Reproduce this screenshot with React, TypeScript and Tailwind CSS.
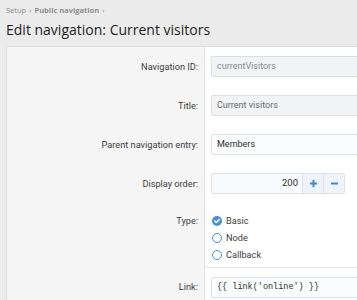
import React from "react";

const font = { fontFamily: 'Roboto, "Open Sans", Arial, sans-serif' };

function Row({ label, children, top = false, sep = false, tight = false }: { label: string; children: React.ReactNode; top?: boolean; sep?: boolean; tight?: boolean }) {
  return (
    <div className="flex">
      <div
        className={`flex w-[198px] shrink-0 justify-end border-r border-[#e2e2e2] bg-[#f5f5f5] pr-[6px] text-[9.2px] text-[#404040] ${
          top ? "items-start pt-[11px]" : "items-center"
        }`}
      >
        {label}
      </div>
      <div className={`flex-1 bg-white pl-[6px] ${tight ? "pt-[9px] pb-[4px]" : "py-[9px]"} ${sep ? "border-t border-[#e4e4e4]" : ""}`}>{children}</div>
    </div>
  );
}

function Radio({ label, checked = false }: { label: string; checked?: boolean }) {
  return (
    <div className="flex h-[17px] items-center gap-[4px] text-[9.2px] text-[#404040]">
      {checked ? (
        <svg width="10" height="10" viewBox="0 0 10 10" className="ml-[1px]">
          <circle cx="5" cy="5" r="5" fill="#4a90d6" />
          <path d="M2.7 5.1 L4.3 6.6 L7.3 3.5" stroke="white" strokeWidth="1.4" fill="none" strokeLinecap="round" strokeLinejoin="round" />
        </svg>
      ) : (
        <span className="ml-[1px] h-[10px] w-[10px] rounded-full border-[1.5px] border-[#4a90d6] bg-white" />
      )}
      <span>{label}</span>
    </div>
  );
}

export default function App() {
  return (
    <div className="h-[300px] w-[357px] overflow-hidden bg-[#ebebeb]" style={font}>
      <div className="pl-[6px] pt-[5px]">
        <div className="flex h-[12px] items-center gap-[3px] text-[7.5px] text-[#8f8f8f]" style={{ fontFamily: '"Open Sans", Arial, sans-serif' }}>
          <span>Setup</span>
          <span>›</span>
          <span className="font-bold">Public navigation</span>
          <span>›</span>
        </div>
        <h1
          className="mt-[1px] h-[24px] text-[14px] leading-[24px] text-[#1e1e1e]"
          style={{ fontFamily: '"Open Sans", Arial, sans-serif' }}
        >
          Edit navigation: Current visitors
        </h1>
        <div className="mt-[4px] w-[480px] border border-[#dcdcdc] bg-white">
          <Row label="Navigation ID:">
            <div className="flex h-[21px] items-center rounded-[2px] border border-[#dcdfe2] bg-[#f1f3f4] px-[5px] text-[9px] text-[#8a8a8a]">
              currentVisitors
            </div>
          </Row>
          <Row label="Title:">
            <div className="flex h-[21px] items-center rounded-[2px] border border-[#dcdfe2] bg-[#f1f3f4] px-[5px] text-[9px] text-[#6a6a6a]">
              Current visitors
            </div>
          </Row>
          <Row label="Parent navigation entry:">
            <div className="flex h-[21px] items-center rounded-[2px] border border-[#dde2e6] bg-[#fafbfc] px-[5px] text-[9px] text-[#2e2e2e]">
              Members
            </div>
          </Row>
          <Row label="Display order:">
            <div className="flex h-[21px] w-[134px] rounded-[2px] border border-[#dde2e6] bg-[#f8fbfd]">
              <div className="flex flex-1 items-center justify-end pr-[4px] text-[9.5px] text-[#2e2e2e]">200</div>
              <div className="flex w-[21px] items-center justify-center border-l border-[#dde2e6] bg-[#eef4fa] text-[#3d88cf]">
                <svg width="9" height="9" viewBox="0 0 9 9">
                  <path d="M4.5 1 V8 M1 4.5 H8" stroke="currentColor" strokeWidth="2" />
                </svg>
              </div>
              <div className="flex w-[21px] items-center justify-center border-l border-[#dde2e6] bg-[#eef4fa] text-[#3d88cf]">
                <svg width="9" height="9" viewBox="0 0 9 9">
                  <path d="M1 4.5 H8" stroke="currentColor" strokeWidth="2" />
                </svg>
              </div>
            </div>
          </Row>
          <Row label="Type:" top tight>
            <div className="flex flex-col">
              <Radio label="Basic" checked />
              <Radio label="Node" />
              <Radio label="Callback" />
            </div>
          </Row>
          <Row label="Link:" sep>
            <div
              className="flex h-[21px] items-center rounded-[2px] border border-[#dde2e6] bg-[#fafbfc] px-[5px] text-[8.5px] text-[#2e2e2e]"
              style={{ fontFamily: '"Liberation Mono", "DejaVu Sans Mono", monospace' }}
            >
              {"{{ link('online') }}"}
            </div>
          </Row>
        </div>
      </div>
    </div>
  );
}
